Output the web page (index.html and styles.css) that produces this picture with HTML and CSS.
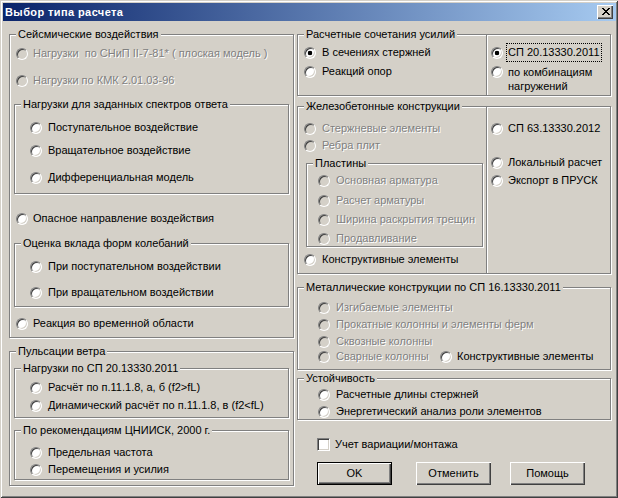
FILE: index.html
```html
<!DOCTYPE html>
<html lang="ru">
<head>
<meta charset="utf-8">
<title>Выбор типа расчета</title>
<link rel="stylesheet" href="styles.css">
</head>
<body>
<div class="window">
  <div class="titlebar">
    <span class="title">Выбор типа расчета</span>
    <span class="close"><svg width="8" height="7" viewBox="0 0 8 7"><path fill="#000" d="M0 0h2v1H0zM6 0h2v1H6zM1 1h2v1H1zM5 1h2v1H5zM2 2h4v1H2zM3 3h2v1H3zM2 4h4v1H2zM1 5h2v1H1zM5 5h2v1H5zM0 6h2v1H0zM6 6h2v1H6z"/></svg></span>
  </div>
  <div class="content">
    <div class="col-left">
      <div class="group g-seis pb7">
        <div class="legend">Сейсмические воздействия</div>
        <div class="r dis mt6"><i class="rb"></i><span>Нагрузки  по СНиП II-7-81* ( плоская модель )</span></div>
        <div class="r dis mt14"><i class="rb"></i><span>Нагрузки по КМК 2.01.03-96</span></div>
        <div class="group g-sub mt17 pb9">
          <div class="legend">Нагрузки для заданных спектров ответа</div>
          <div class="r mt10"><i class="rb"></i><span>Поступательное воздействие</span></div>
          <div class="r mt10"><i class="rb"></i><span>Вращательное воздействие</span></div>
          <div class="r mt14"><i class="rb"></i><span>Дифференциальная модель</span></div>
        </div>
        <div class="r mt18"><i class="rb"></i><span>Опасное направление воздействия</span></div>
        <div class="group g-sub mt18 pb7">
          <div class="legend">Оценка вклада форм колебаний</div>
          <div class="r mt10"><i class="rb"></i><span>При поступательном воздействии</span></div>
          <div class="r mt13"><i class="rb"></i><span>При вращательном воздействии</span></div>
        </div>
        <div class="r mt10"><i class="rb"></i><span>Реакция во временной области</span></div>
      </div>
      <div class="group g-seis mt13 pb5">
        <div class="legend">Пульсации ветра</div>
        <div class="group g-sub mt10 pb5">
          <div class="legend">Нагрузки по СП 20.13330.2011</div>
          <div class="r mt6"><i class="rb"></i><span>Расчёт по п.11.1.8, а, б (f2&gt;fL)</span></div>
          <div class="r mt5"><i class="rb"></i><span>Динамический расчёт по п.11.1.8, в (f2&lt;fL)</span></div>
        </div>
        <div class="group g-sub mt12 pb3">
          <div class="legend">По рекомендациям ЦНИИСК, 2000 г.</div>
          <div class="r mt9"><i class="rb"></i><span>Предельная частота</span></div>
          <div class="r mt4"><i class="rb"></i><span>Перемещения и усилия</span></div>
        </div>
      </div>
    </div>

    <div class="col-right">
      <div class="pair">
        <div class="group g-main">
          <div class="legend">Расчетные сочетания усилий</div>
          <div class="r mt5"><i class="rb on"></i><span>В сечениях стержней</span></div>
          <div class="r mt6"><i class="rb"></i><span>Реакций опор</span></div>
        </div>
        <div class="group g-side pb2">
          <div class="r mt11"><i class="rb on"></i><span class="focus">СП 20.13330.2011</span></div>
          <div class="r tall mt6"><i class="rb"></i><span>по комбинациям<br>нагружений</span></div>
        </div>
      </div>

      <div class="pair mt10">
        <div class="group g-main pb7">
          <div class="legend">Железобетонные конструкции</div>
          <div class="r dis mt9"><i class="rb"></i><span>Стержневые элементы</span></div>
          <div class="r dis mt4"><i class="rb"></i><span>Ребра плит</span></div>
          <div class="group g-plates mt11 pb1">
            <div class="legend">Пластины</div>
            <div class="r dis mt4"><i class="rb"></i><span>Основная арматура</span></div>
            <div class="r dis mt7"><i class="rb"></i><span>Расчет арматуры</span></div>
            <div class="r dis mt6"><i class="rb"></i><span>Ширина раскрытия трещин</span></div>
            <div class="r dis mt6"><i class="rb"></i><span>Продавливание</span></div>
          </div>
          <div class="r mt6"><i class="rb"></i><span>Конструктивные элементы</span></div>
        </div>
        <div class="group g-side">
          <div class="r mt15"><i class="rb"></i><span>СП 63.13330.2012</span></div>
          <div class="r mt21"><i class="rb"></i><span>Локальный расчет</span></div>
          <div class="r mt5"><i class="rb"></i><span>Экспорт в ПРУСК</span></div>
        </div>
      </div>

      <div class="group g-metal mt13 pb6">
        <div class="legend">Металлические конструкции по СП 16.13330.2011</div>
        <div class="r dis mt7"><i class="rb"></i><span>Изгибаемые элементы</span></div>
        <div class="r dis mt4"><i class="rb"></i><span>Прокатные колонны и элементы ферм</span></div>
        <div class="r dis mt4"><i class="rb"></i><span>Сквозные колонны</span></div>
        <div class="row mt2">
          <div class="r dis wide"><i class="rb"></i><span>Сварные колонны</span></div>
          <div class="r"><i class="rb"></i><span>Конструктивные элементы</span></div>
        </div>
      </div>

      <div class="group g-metal mt8 pb1">
        <div class="legend">Устойчивость</div>
        <div class="r mt3"><i class="rb"></i><span>Расчетные длины стержней</span></div>
        <div class="r mt4"><i class="rb"></i><span>Энергетический анализ роли элементов</span></div>
      </div>

      <div class="chk mt18"><i class="cb"></i><span>Учет вариации/монтажа</span></div>

      <div class="btns mt11">
        <button class="btn def">OK</button>
        <button class="btn b-cancel">Отменить</button>
        <button class="btn b-help">Помощь</button>
      </div>
    </div>
  </div>
</div>
</body>
</html>
```

FILE: styles.css
```css
html, body {
  margin: 0;
  padding: 0;
}
body {
  font: 11px/13px "Liberation Sans", Arial, sans-serif;
  color: #000;
  background: #d4d0c8;
}
.window {
  width: 618px;
  height: 498px;
  box-sizing: border-box;
  padding: 3px 2px 2px 3px;
  background: #d4d0c8;
  box-shadow: inset 1px 1px #d4d0c8, inset -1px -1px #404040, inset 2px 2px #fff, inset -2px -2px #808080;
}
.titlebar {
  height: 18px;
  display: flex;
  align-items: center;
  justify-content: space-between;
  padding: 0 3px 0 2px;
  background: linear-gradient(to right, #0a246a, #a6caf0);
}
.title {
  color: #fff;
  font-weight: bold;
  letter-spacing: 0.4px;
}
.close {
  width: 16px;
  height: 14px;
  box-sizing: border-box;
  padding: 3px 0 0 5px;
  background: #d4d0c8;
  box-shadow: inset 1px 1px #fff, inset -1px -1px #404040, inset -2px -2px #808080;
  display: flex;
  align-items: flex-start;
}
.close svg { display: block; }

.content {
  display: flex;
  padding: 13px 0 0 6px;
}
.col-left {
  width: 285px;
  display: flex;
  flex-direction: column;
}
.col-right {
  width: 314px;
  margin-left: 3px;
  display: flex;
  flex-direction: column;
}

.group {
  border: 1px solid #808080;
  box-shadow: inset 1px 1px #fff, 1px 1px #fff;
  display: flex;
  flex-direction: column;
}
.legend {
  align-self: flex-start;
  margin: -7px 0 0 6px;
  padding: 0 2px;
  height: 13px;
  background: #d4d0c8;
  white-space: pre;
}

.r {
  display: flex;
  align-items: center;
  height: 13px;
  white-space: pre;
}
.r.tall {
  height: auto;
  align-items: flex-start;
  line-height: 14px;
}
.r.tall .rb { margin-top: 1px; }
.row { display: flex; }

.rb {
  flex: none;
  box-sizing: border-box;
  width: 12px;
  height: 12px;
  margin-right: 6px;
  border-radius: 50%;
  border: 1px solid;
  border-color: #808080 #fff #fff #808080;
  background: #fff;
  box-shadow: inset 1px 1px #404040, inset -1px -1px #d4d0c8;
}
.rb.on {
  background: radial-gradient(circle, #000 0, #000 2px, #fff 2.6px);
}
.dis .rb { background: #d4d0c8; }
.dis span {
  color: #808080;
  text-shadow: 1px 1px #fff;
}

.focus {
  outline: 1px dotted #000;
  padding: 2px 1px;
  margin: -2px -1px;
}

/* group-specific horizontal placement */
.g-seis > .r { margin-left: 6px; }
.g-seis > .r .rb { margin-right: 5px; }
.g-sub { margin-left: 4px; margin-right: 4px; }
.g-sub > .r { margin-left: 15px; }
.pair { display: flex; }
.g-main { width: 190px; box-sizing: border-box; }
.g-main > .r { margin-left: 6px; }
.g-side { width: 125px; box-sizing: border-box; margin-left: -1px; }
.g-side > .r { margin-left: 4px; }
.g-side .rb { margin-right: 5px; }
.g-plates { margin-left: 8px; margin-right: 3px; }
.g-plates > .r { margin-left: 11px; }
.g-metal > .r, .g-metal > .row { margin-left: 20px; }
.row .wide { width: 122px; }
.row .r .rb { margin-right: 5px; }
.row .wide .rb { margin-right: 6px; }

.chk {
  display: flex;
  align-items: center;
  height: 13px;
  margin-left: 20px;
}
.cb {
  flex: none;
  box-sizing: border-box;
  width: 13px;
  height: 13px;
  margin-right: 5px;
  border: 1px solid;
  border-color: #808080 #fff #fff #808080;
  box-shadow: inset 1px 1px #404040, inset -1px -1px #d4d0c8;
  background: #fff;
}

.btns {
  display: flex;
  margin-left: 20px;
}
.btn {
  width: 75px;
  height: 23px;
  box-sizing: border-box;
  padding: 0;
  border: 0;
  font: inherit;
  color: #000;
  background: #d4d0c8;
  box-shadow: inset 1px 1px #fff, inset -1px -1px #404040, inset -2px -2px #808080;
}
.btn.def { border: 1px solid #000; }
.b-cancel { margin-left: 24px; }
.b-help { margin-left: 19px; }

/* vertical spacing */
.mt2 { margin-top: 2px; }
.mt3 { margin-top: 3px; }
.mt4 { margin-top: 4px; }
.mt5 { margin-top: 5px; }
.mt6 { margin-top: 6px; }
.mt7 { margin-top: 7px; }
.mt8 { margin-top: 8px; }
.mt9 { margin-top: 9px; }
.mt10 { margin-top: 10px; }
.mt11 { margin-top: 11px; }
.mt12 { margin-top: 12px; }
.mt13 { margin-top: 13px; }
.mt14 { margin-top: 14px; }
.mt15 { margin-top: 15px; }
.mt17 { margin-top: 17px; }
.mt18 { margin-top: 18px; }
.mt21 { margin-top: 21px; }
.pb1 { padding-bottom: 1px; }
.pb2 { padding-bottom: 2px; }
.pb3 { padding-bottom: 3px; }
.pb5 { padding-bottom: 5px; }
.pb6 { padding-bottom: 6px; }
.pb7 { padding-bottom: 7px; }
.pb9 { padding-bottom: 9px; }
```
